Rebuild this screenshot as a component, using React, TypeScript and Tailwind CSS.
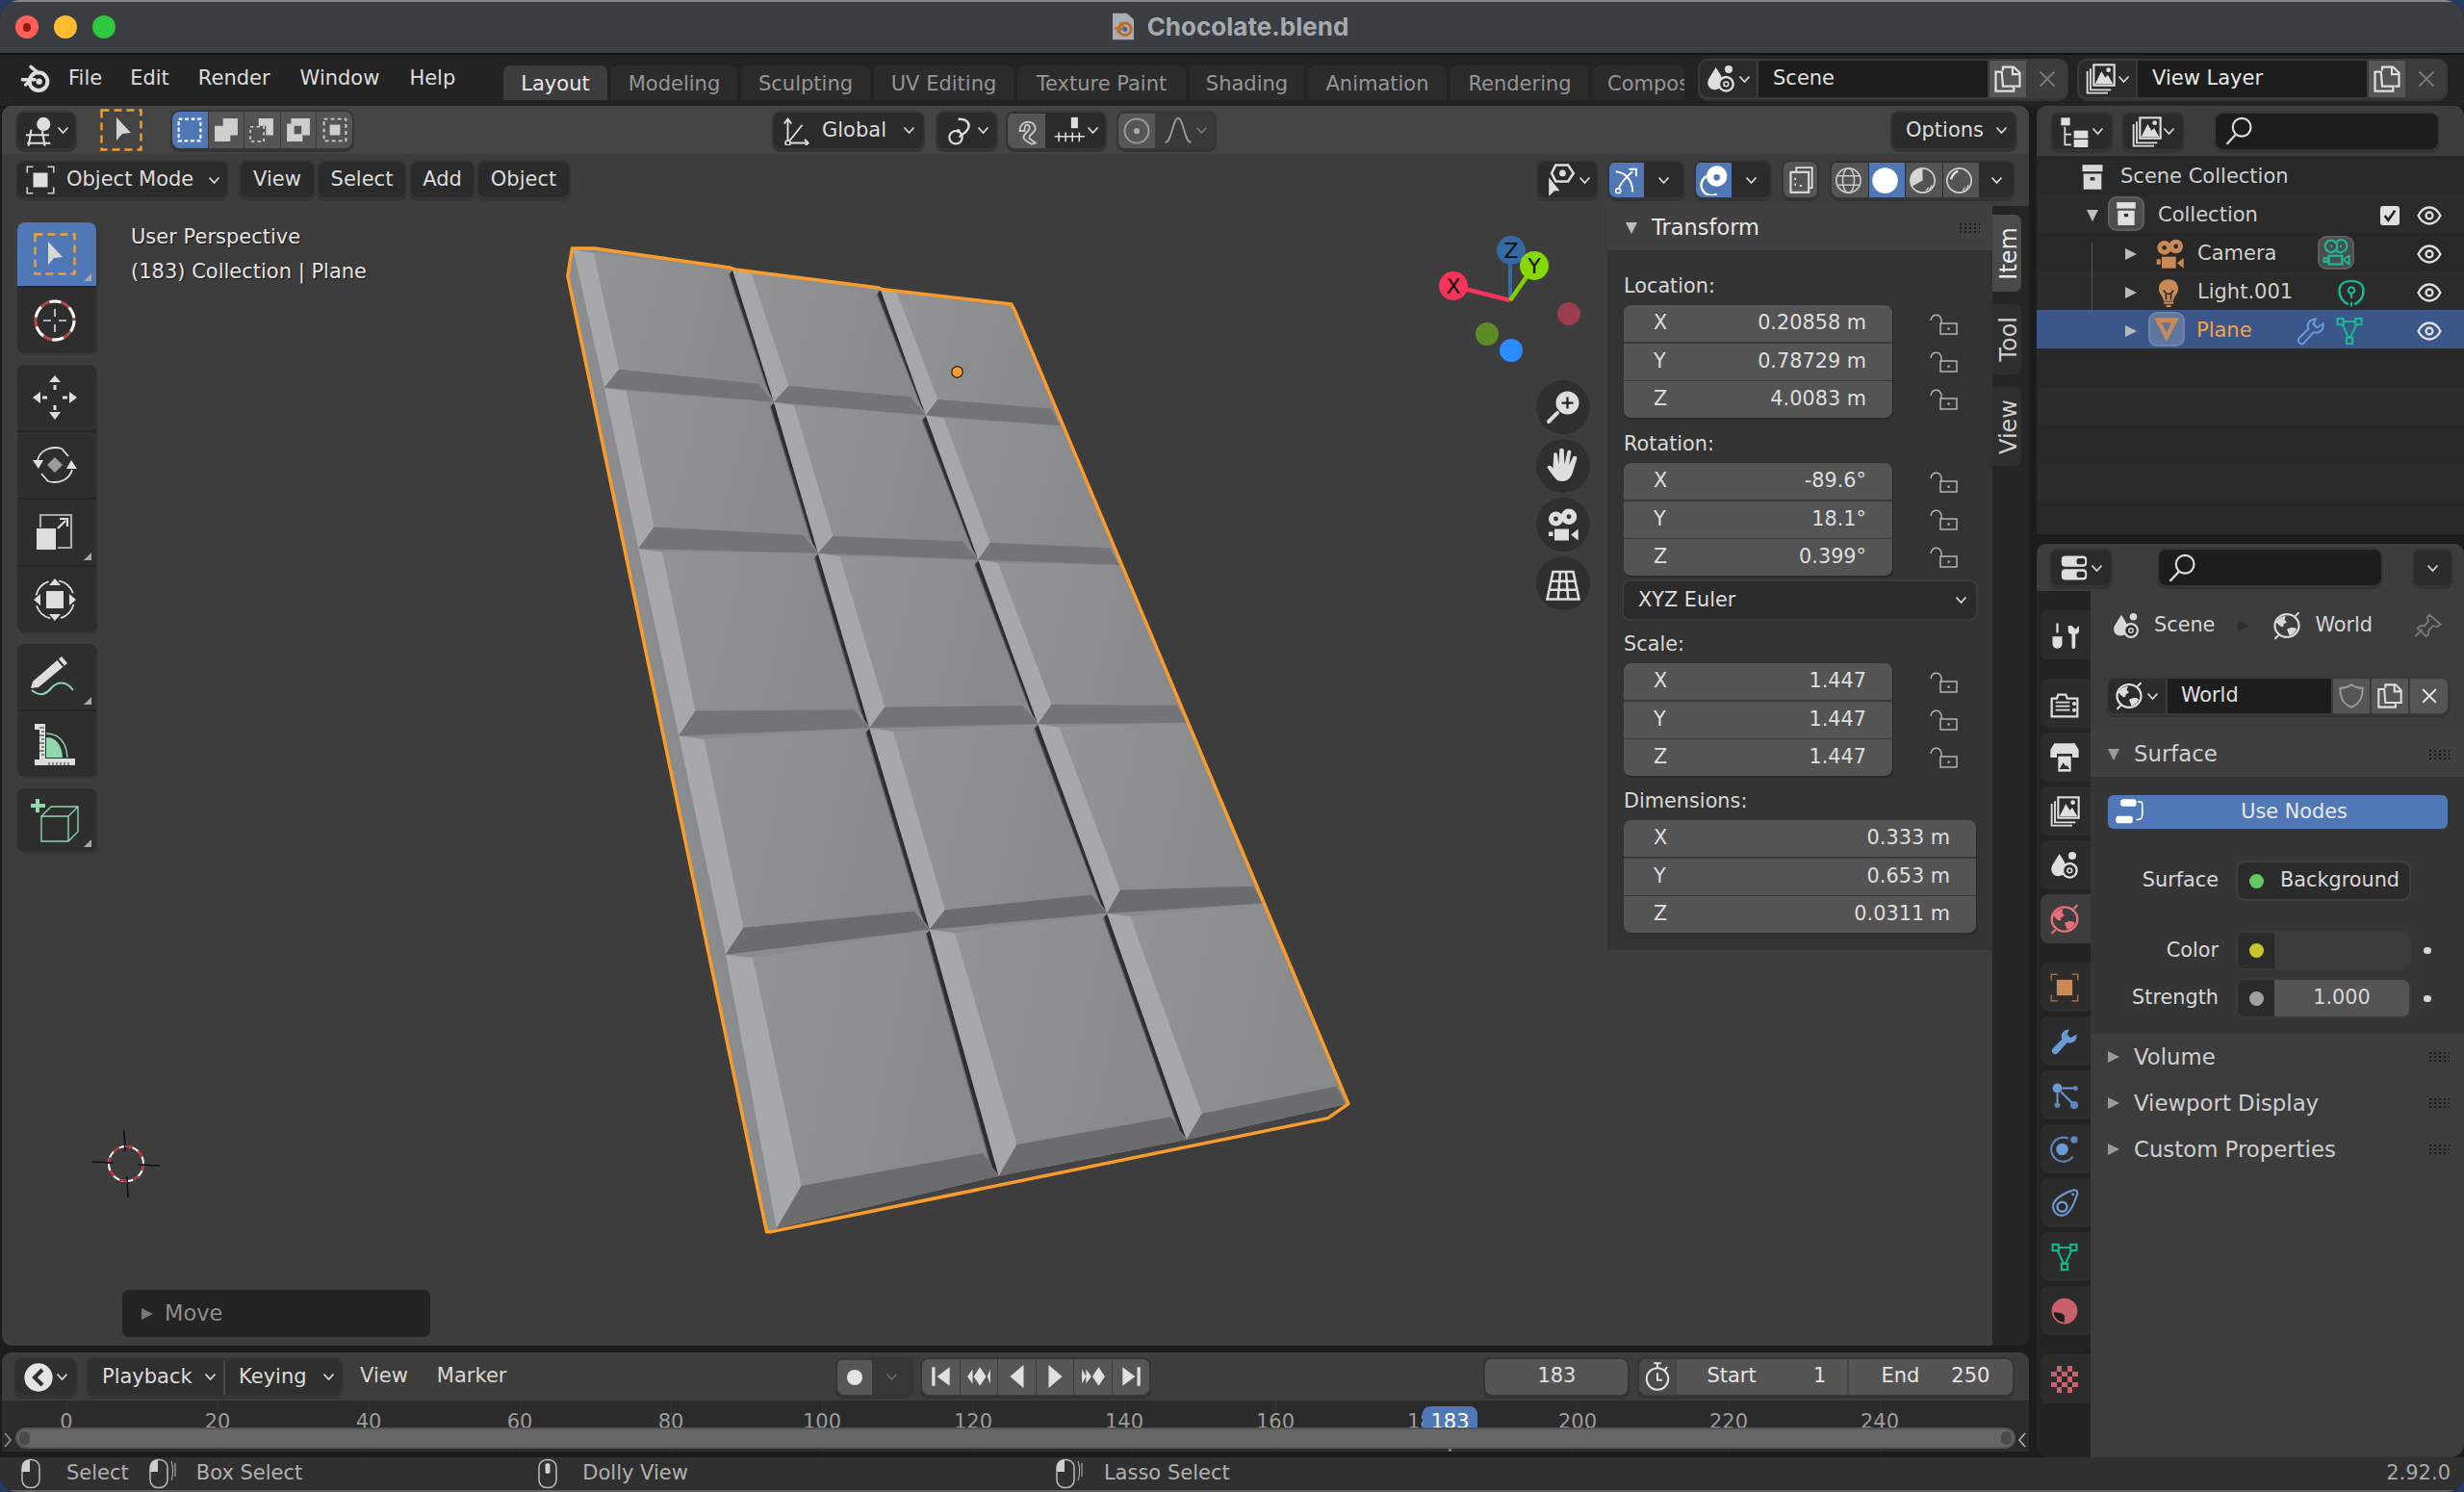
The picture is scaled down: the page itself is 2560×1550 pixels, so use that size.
import React from "react";

type P = { c?: string; s?: number; className?: string };
const W = "#dedede";

function Ic({ s = 28, h, vb = "0 0 24 24", children, className }: { s?: number; h?: number; vb?: string; children: React.ReactNode; className?: string }) {
  return (
    <svg width={s} height={h ?? s} viewBox={vb} fill="none" className={"shrink-0 " + (className ?? "")}>
      {children}
    </svg>
  );
}
const Chev = ({ c = "#d8d8d8" }: P) => (
  <svg width="13" height="9" viewBox="0 0 13 9" fill="none" className="shrink-0">
    <path d="M1.5 1.5 6.5 7l5-5.500" stroke={c} strokeWidth="1.8" />
  </svg>
);
const Blender = () => (
  <Ic s={32} h={32}>
    <path d="M9 2.500 15 7.500" stroke={W} strokeWidth="2.600" strokeLinecap="round" />
    <path d="M2.500 12.500 H12 M5 16.500 9.500 12.500" stroke={W} strokeWidth="2.600" strokeLinecap="round" />
    <circle cx="15" cy="14" r="7" stroke={W} strokeWidth="3" />
    <circle cx="15.500" cy="14" r="2.400" fill={W} />
  </Ic>
);
const Scenes = ({ s = 30, c = W }: P) => (
  <Ic s={s}>
    <path d="M8 3 C11 8 14 11 13 16 C12 20 8 21 5 20 C1 18 1 14 3 11Z" fill={c} />
    <circle cx="18" cy="4.500" r="3" fill={c} />
    <circle cx="16" cy="16" r="5.500" stroke={c} strokeWidth="1.800" fill="#2b2b2b" />
    <circle cx="16" cy="16" r="1.800" stroke={c} strokeWidth="1.200" />
  </Ic>
);
const Copy = ({ s = 30 }: P) => (
  <Ic s={s}>
    <path d="M8 5V2h9l5 5v11h-4" stroke={W} strokeWidth="1.800" />
    <path d="M7 6H2v16h15v-4H8Z" stroke={W} strokeWidth="1.800" />
    <path d="M16 2v6h6" stroke={W} strokeWidth="1.800" />
  </Ic>
);
const X = ({ c = "#777", s = 20 }: P) => (
  <Ic s={s}>
    <path d="M3 3 21 21M21 3 3 21" stroke={c} strokeWidth="2.400" />
  </Ic>
);
const VLayer = ({ s = 30, c = W }: P) => (
  <Ic s={s}>
    <path d="M2 6v17h16M4.500 4v16.500h16" stroke={c} strokeWidth="1.400" />
    <rect x="7" y="1" width="16" height="16" fill="#2b2b2b" stroke={c} strokeWidth="1.600" />
    <path d="M8 16 13 6l3 5 2-2 4 7Z" fill={c} />
    <circle cx="18.500" cy="5" r="1.800" fill={c} />
  </Ic>
);
const Search = ({ s = 30 }: P) => (
  <Ic s={s}>
    <circle cx="14.500" cy="9" r="7.500" stroke={W} strokeWidth="1.700" />
    <path d="M9.500 15 2 23" stroke={W} strokeWidth="1.800" />
  </Ic>
);
const Grip = () => (
  <svg width="21" height="10" viewBox="0 0 21 10" className="shrink-0">
    {[0, 5, 10, 15, 20].map((x) => [0, 4, 8].map((y) => <rect key={x + "-" + y} x={x} y={y} width="2" height="2" fill="#141414" opacity="0.85" />))}
  </svg>
);
const Eye = () => (
  <Ic s={26} h={20} vb="0 0 26 20">
    <path d="M1.500 10C5 3 9 1.500 13 1.500S21 3 24.500 10C21 17 17 18.500 13 18.500S5 17 1.500 10Z" stroke={W} strokeWidth="2.300" />
    <circle cx="13" cy="10" r="3.500" stroke={W} strokeWidth="2.300" />
  </Ic>
);
const Lock = () => (
  <Ic s={29} h={23} vb="0 0 29 23">
    <path d="M1 8C2 1 10 0 12 7v4" stroke="#b4b4b4" strokeWidth="1.400" />
    <rect x="11" y="11" width="17" height="11" stroke="#b4b4b4" strokeWidth="1.500" />
    <rect x="18.500" y="15.500" width="2.200" height="2.200" fill="#b4b4b4" />
  </Ic>
);
const Box3 = ({ s = 28, c = W }: P) => (
  <Ic s={s}>
    <rect x="3" y="1" width="18" height="6" fill={c} />
    <path d="M4 9h16v14H4Z" fill={c} />
    <rect x="10" y="12" width="4" height="3" fill="#333" />
  </Ic>
);
const Cam = ({ s = 32, c = "#c98a55", stroke = false }: P & { stroke?: boolean }) =>
  stroke ? (
    <Ic s={s}>
      <circle cx="8" cy="7" r="5" stroke={c} strokeWidth="1.800" />
      <path d="M12 5c2-5 9-4 9 2 0 5-6 6-9 4" stroke={c} strokeWidth="1.800" />
      <circle cx="8" cy="7" r="1" fill={c} />
      <circle cx="16" cy="7" r="1" fill={c} />
      <rect x="6" y="15" width="11" height="7" stroke={c} strokeWidth="1.800" />
      <path d="M18 18l5-3v7Z M2 17h3v3H2Z" stroke={c} strokeWidth="1.500" />
    </Ic>
  ) : (
    <Ic s={s}>
      <circle cx="8" cy="7" r="5.500" fill={c} />
      <circle cx="17" cy="6" r="5.500" fill={c} />
      <circle cx="8" cy="7" r="1.800" fill="#2b2b2b" />
      <circle cx="17" cy="6" r="1.800" fill="#2b2b2b" />
      <rect x="6" y="14" width="11" height="9" fill={c} />
      <path d="M18 19l5-4v8ZM2 16h3v4H2Z" fill={c} />
    </Ic>
  );
const Bulb = ({ s = 30, c = "#c98a55" }: P) => (
  <Ic s={s}>
    <path d="M12 1c5 0 8 3 8 8 0 4-3 5-4 10H8C7 14 4 13 4 9c0-5 3-8 8-8Z" fill={c} />
    <path d="M8 10l2 3v5M16 10l-2 3v5M10 13h4" stroke="#2b2b2b" strokeWidth="1.300" />
    <path d="M8 20.500h8M10 23h4" stroke={c} strokeWidth="1.800" />
  </Ic>
);
const LightData = () => (
  <Ic s={30} h={34} vb="0 0 24 28">
    <path d="M9.500 24C3 21 1 16 2 10 4 2 20 2 22 10c1 6-1 11-7.500 14" stroke="#1fb594" strokeWidth="2" />
    <circle cx="12" cy="12" r="2.600" stroke="#1fb594" strokeWidth="1.800" />
    <path d="M12 15v4M12 22v4" stroke="#1fb594" strokeWidth="1.800" />
  </Ic>
);
const PlaneI = ({ s = 28 }: P) => (
  <Ic s={s}>
    <path d="M1 2h22L12 23Z" fill="#c98a55" />
    <path d="M7.500 6h9L12 15Z" fill="#5f769f" />
  </Ic>
);
const WR = "M22 8c0 4-4 6-8 5l-8 9c-2 2-6-1-4-4l8-8C8 6 11 2 16 2l-2 4 3 3 5-3Z";
const Wrench = ({ s = 30, c = "#6c9ad6" }: P) => (
  <Ic s={s}>
    <path d={WR} fill={c} />
  </Ic>
);
const WrenchO = ({ s = 30, c = "#6c9ad6" }: P) => (
  <Ic s={s}>
    <path d={WR} stroke={c} strokeWidth="1.600" />
  </Ic>
);
const MeshData = ({ s = 30, c = "#1fb594", bg = "#3b5689" }: P & { bg?: string }) => (
  <Ic s={s}>
    <path d="M5 4h14L12 19Z" stroke={c} strokeWidth="1.700" />
    <rect x="2" y="1.500" width="5" height="5" fill={bg} stroke={c} strokeWidth="1.700" />
    <rect x="17" y="1.500" width="5" height="5" fill={bg} stroke={c} strokeWidth="1.700" />
    <rect x="9.500" y="17.500" width="5" height="5" fill={bg} stroke={c} strokeWidth="1.700" />
  </Ic>
);
const World = ({ s = 30, c = W }: P) => (
  <Ic s={s}>
    <ellipse cx="12" cy="12" rx="10" ry="9.500" stroke={c} strokeWidth="1.800" />
    <path d="M3 9c3-4 6-5 8-5l-1 3 2 2-3 2c1 3-2 2-3 1Z M12 15c3-2 7-2 8 0-1 3-4 5-6 5Z" fill={c} />
    <path d="M19 4l3-3M5 20l-3 3" stroke={c} strokeWidth="1.600" />
  </Ic>
);

/* toolbar icons */
const ActiveTool = ({ s = 44 }: P) => (
  <Ic s={s} vb="0 0 44 44" h={44}>
    <rect x="1.500" y="1.500" width="41" height="41" stroke="#f0a030" strokeWidth="2.400" strokeDasharray="8 5" />
    <path d="M17 9v24l6-7 9-1Z" fill="#d4d4d4" />
  </Ic>
);
const ToolCursor = () => (
  <Ic s={48}>
    <circle cx="12" cy="12" r="10" stroke="#b34a4a" strokeWidth="1.500" />
    <circle cx="12" cy="12" r="10" stroke="#fff" strokeWidth="1.500" strokeDasharray="6 5" />
    <path d="M12 6v4M12 14v4M6 12h4M14 12h4" stroke="#ddd" strokeWidth=".8" />
  </Ic>
);
const ToolMove = () => (
  <Ic s={50} vb="0 0 50 50">
    <path d="M25 2l6 7H19ZM25 48l6-8H19ZM2 25l8-6v12ZM48 25l-8-6v12Z" fill={W} />
    <path d="M25 12v5M25 33v5M12 25h5M33 25h5" stroke={W} strokeWidth="3" />
  </Ic>
);
const ToolRotate = () => (
  <Ic s={50} vb="0 0 50 50">
    <path d="M7 20C10 9 22 5 32 8l7 8M43 30c-3 11-15 15-25 12l-7-8" stroke={W} strokeWidth="1.800" />
    <path d="M2 20h11l-5 9ZM48 29H37l5-9Z" fill={W} />
    <path d="M25 17l8 8-8 8-8-8Z" fill="#9c9c9c" />
  </Ic>
);
const ToolScale = () => (
  <Ic s={40} vb="0 0 40 40">
    <path d="M5 15V2h32v34H23" stroke="#a8a8a8" strokeWidth="2.200" />
    <rect x="1" y="16" width="20" height="22" fill={W} />
    <path d="M23 16l8-8M25 6h8v8" stroke={W} strokeWidth="2.200" />
  </Ic>
);
const ToolTransform = () => (
  <Ic s={50} vb="0 0 50 50">
    <circle cx="25" cy="25" r="20" stroke={W} strokeWidth="1.800" strokeDasharray="20 11" strokeDashoffset="-5" />
    <rect x="16" y="16" width="18" height="18" fill={W} />
    <path d="M25 3l6 7H19ZM25 47l6-7H19ZM3 25l7-6v12ZM47 25l-7-6v12Z" fill={W} />
  </Ic>
);
const ToolAnnotate = () => (
  <Ic s={54} vb="0 0 54 54">
    <path d="M4 32 34 6l6 7-30 25-8 1Z" fill={W} />
    <path d="M30 9l6 7" stroke="#2e2e2e" strokeWidth="2" />
    <path d="M3 41c10 8 16 3 21-3 5-5 14-8 22 3" stroke="#8fd8ae" strokeWidth="2" />
  </Ic>
);
const ToolMeasure = () => (
  <Ic s={46} vb="0 0 46 46">
    <path d="M2 2h11v36h31v7H2V39h5V8H2Z" fill={W} />
    <path d="M12 6h-5M12 10h-3M12 14h-5M12 18h-3M12 22h-5M12 26h-3M12 30h-5M12 34h-3M17 45v-3M21 45v-3M25 45v-3M29 45v-3M33 45v-3M37 45v-3" stroke="#2e2e2e" strokeWidth="1" />
    <path d="M14 16c10 0 16 7 17 21H14Z" fill="#8fd8ae" />
    <path d="M14 12c13 0 21 9 22 25" stroke="#8fd8ae" strokeWidth="1.400" />
  </Ic>
);
const ToolAdd = () => (
  <Ic s={52} vb="0 0 52 52">
    <path d="M8 4v14M1 11h15" stroke="#8fd8ae" strokeWidth="4" />
    <path d="M12 22h28v26H12ZM12 22l10-10h28v26L40 48M40 22l10-10" stroke="#8fd8ae" strokeWidth="1.400" />
  </Ic>
);
const Corner = () => <div className="absolute right-[5px] bottom-[5px] w-0 h-0 border-l-[8px] border-l-transparent border-b-[8px] border-b-[#a8a8a8]" />;

/* small button shell */
const rim = "shadow-[0_0_0_2px_#363636,0_2px_0_2px_#333]";
const rimB = "shadow-[0_0_0_2px_#3a3a3a,0_2px_0_2px_#333]";
const Btn = ({ className = "", children }: { className?: string; children?: React.ReactNode }) => (
  <div className={"flex items-center h-[37px] pt-[1px] rounded-[7px] bg-[#2b2b2b] text-[#dcdcdc] text-[21px] shrink-0 " + rim + " " + className}>{children}</div>
);
const TabBtn = ({ name, w, active }: { name: string; w: number; active?: boolean }) => (
  <div style={{ width: w }} className={"h-[36px] pt-[3px] mr-[4px] rounded-t-[7px] overflow-hidden shrink-0 flex items-center justify-center text-[21px] whitespace-nowrap " + (active ? "bg-[#3d3d3d] text-[#e8e8e8]" : "bg-[#2b2b2b] text-[#959595]")}>
    {name}
  </div>
);

const SelMode = ({ kind }: { kind: number }) => {
  const d = "#cfcfcf";
  return (
    <Ic s={26}>
      {kind === 0 && <rect x="1.500" y="1.500" width="21" height="21" stroke="#fff" strokeWidth="2" strokeDasharray="3.500 2.500" />}
      {kind === 1 && <path d="M9 1h14v16h-7v6H1V8h8Z" fill={d} />}
      {kind === 2 && (
        <>
          <path d="M9 1h14v16H16V8H9Z" fill={d} />
          <path d="M1 9h13v14H1Z" stroke={d} strokeWidth="1.600" strokeDasharray="3 3" />
        </>
      )}
      {kind === 3 && <path fillRule="evenodd" d="M5 1h18v16h-7v6H1V6h4ZM8 8v8h7V8Z" fill={d} />}
      {kind === 4 && (
        <>
          <rect x="1.500" y="1.500" width="21" height="21" stroke={d} strokeWidth="1.800" strokeDasharray="3.500 3" />
          <rect x="7" y="7" width="10" height="10" fill={d} />
        </>
      )}
    </Ic>
  );
};

const Shading = ({ k }: { k: number }) => (
  <Ic s={29}>
    {k === 0 && (
      <>
        <circle cx="12" cy="12" r="10.500" stroke="#c8c8c8" strokeWidth="1.400" />
        <ellipse cx="12" cy="12" rx="5" ry="10.500" stroke="#c8c8c8" strokeWidth="1.300" />
        <path d="M2 8h20M2 16h20" stroke="#c8c8c8" strokeWidth="1.300" />
      </>
    )}
    {k === 1 && <circle cx="12" cy="12" r="11" fill="#fff" />}
    {k === 2 && (
      <>
        <circle cx="12" cy="12" r="10.500" stroke="#cfcfcf" strokeWidth="1.400" />
        <path d="M12 1.500A10.500 10.500 0 0 0 3 17l9-5Z" fill="#d6d6d6" />
        <path d="M15 21l2-3M18 20l2-4" stroke="#cfcfcf" />
      </>
    )}
    {k === 3 && (
      <>
        <circle cx="12" cy="12" r="10.500" stroke="#cfcfcf" strokeWidth="1.400" />
        <path d="M5 11c1-4 3-6 6-7" stroke="#e0e0e0" strokeWidth="2" />
        <path d="M15 21l2-3M18 20l2-4" stroke="#cfcfcf" />
      </>
    )}
  </Ic>
);

/* Chocolate bar */
const G = [
  [[62, 30], [350, 60], [618, 90], [858, 118]],
  [[118, 240], [425, 262], [700, 282], [943, 298]],
  [[180, 485], [505, 492], [795, 502], [1050, 510]],
  [[253, 770], [598, 758], [903, 752], [1172, 750]],
  [[338, 1103], [707, 1065], [1028, 1040], [1310, 1025]],
  [[430, 1520], [832, 1440], [1172, 1385], [1460, 1330]],
];
const D = [
  [[27, 28], [27, 25], [22, 24]],
  [[28, 33], [27, 26], [22, 26]],
  [[30, 38], [28, 32], [25, 30]],
  [[32, 41], [28, 30], [24, 35]],
  [[45, 65], [33, 48], [28, 40]],
];
const pts = (a: number[][]) => a.map((p) => p.join(",")).join(" ");
function Chocolate() {
  const cells: React.ReactNode[] = [];
  for (let r = 0; r < 5; r++)
    for (let c = 0; c < 3; c++) {
      const TL = G[r][c], TR = G[r][c + 1], BR = G[r + 1][c + 1], BL = G[r + 1][c];
      const top = [37, 34, 30][c] + r * 3;
      const iTL = [TL[0] + top, TL[1] + 5];
      const iBL = [BL[0] + D[r][c][0], BL[1] - D[r][c][1]];
      const iBR = c < 2 ? [BR[0] - 28, BR[1] - (r === 4 ? 35 : 28)] : [BR[0] - 17, BR[1] - 26];
      cells.push(
        <g key={r + "-" + c}>
          <polygon points={pts([iTL, TR, BR, iBR, iBL])} fill="url(#face)" />
          <polygon points={pts([TL, iTL, iBL, BL])} fill="#a6a8ab" />
          <polygon points={pts([BL, iBL, iBR, BR])} fill={r < 3 ? "#737476" : "#6b6c6e"} />
          {c < 2 && <polygon points={pts([TR, BR, [BR[0] - 14 - r, BR[1] - 24], [TR[0] - 7, TR[1] + 8]])} fill="#5e5f61" />}
          {c < 2 && <polygon points={pts([[TR[0] + 1, TR[1] + 2], [BR[0] + 2, BR[1]], [BR[0] - 8 - r, BR[1] - 14], [TR[0] - 5, TR[1] + 6]])} fill="#2e2e31" />}
        </g>
      );
    }
  const outline = "60,28 100,28 345,57 355,60 615,88 620,90 855,113 860,120 1465,1330 1428,1352 420,1525 412,1525 52,70";
  return (
    <svg width="900" height="1070" viewBox="0 0 1568 1568" preserveAspectRatio="none" className="absolute left-[558px] top-[129px]">
      <defs>
        <linearGradient id="face" x1="0" y1="0" x2="1" y2="0.200">
          <stop offset="0" stopColor="#939496" />
          <stop offset="1" stopColor="#88898b" />
        </linearGradient>
      </defs>
      <polygon points={outline} fill="#8a8b8d" />
      <polygon points="52,70 62,30 430,1520 412,1525" fill="#8b8c8e" />
      <polygon points="1428,1352 1465,1330 1172,1385 832,1440 430,1520 420,1525" fill="#434345" />
      {cells}
      <polygon points={outline} fill="none" stroke="#fa9c2b" strokeWidth="3.500" strokeLinejoin="round" vectorEffect="non-scaling-stroke" />
      <ellipse cx="757" cy="216" rx="10" ry="8.500" fill="#fa9c2b" stroke="#222" strokeWidth="1.200" vectorEffect="non-scaling-stroke" />
    </svg>
  );
}

const Gizmo = () => (
  <svg width="160" height="160" viewBox="1490 240 160 160" className="absolute left-[1488px] top-[129px]">
    <path d="M1569 313V270" stroke="#346aa3" strokeWidth="4" />
    <path d="M1569 313 1510 298" stroke="#f5345c" strokeWidth="4.500" />
    <path d="M1569 313 1592 280" stroke="#7fd000" strokeWidth="4.500" />
    <circle cx="1570" cy="261" r="15" fill="#346aa3" />
    <circle cx="1594" cy="277" r="15" fill="#85d900" />
    <circle cx="1510" cy="298" r="15" fill="#f5345c" />
    <circle cx="1630" cy="327" r="12" fill="#9a3d4e" />
    <circle cx="1545" cy="348" r="12" fill="#5f8a28" />
    <circle cx="1570" cy="365" r="12" fill="#2a8cff" />
    <text x="1570" y="269" textAnchor="middle" fontSize="22" fill="#0c0c0c">Z</text>
    <text x="1594" y="285" textAnchor="middle" fontSize="22" fill="#0c0c0c">Y</text>
    <text x="1510" y="306" textAnchor="middle" fontSize="22" fill="#0c0c0c">X</text>
  </svg>
);
const NavCircle = ({ children }: { children: React.ReactNode }) => (
  <div className="w-[56px] h-[56px] rounded-full bg-[#2f2f2f] flex items-center justify-center">{children}</div>
);
const ToolGroup = ({ children }: { children: React.ReactNode }) => (
  <div className="flex flex-col w-[82px] rounded-[8px] overflow-hidden gap-[2px] bg-[#262626] shadow-[2px_2px_0_#363636]">{children}</div>
);
const ToolItem = ({ children, corner, active, h = 68 }: { children: React.ReactNode; corner?: boolean; active?: boolean; h?: number }) => (
  <div style={{ height: h }} className={"relative flex items-center justify-center pr-[5px] " + (active ? "bg-[#5178b6]" : "bg-[#2e2e2e]")}>
    {children}
    {corner && <Corner />}
  </div>
);

const NumGroup = ({ rows }: { rows: [string, string][] }) => (
  <div className="flex flex-col gap-[1.500px] rounded-[8px] overflow-hidden bg-[#3a3a3a] shadow-[1px_2px_0_#2a2a2a]">
    {rows.map(([a, b]) => (
      <div key={a} className="h-[38px] bg-[#545454] flex items-center justify-between pl-[31px] pr-[27px] text-[#dedede] text-[20.800px]">
        <span>{a}</span>
        <span>{b}</span>
      </div>
    ))}
  </div>
);
const Locked = ({ rows }: { rows: [string, string][] }) => (
  <div className="flex items-start">
    <div className="w-[279px]">
      <NumGroup rows={rows} />
    </div>
    <div className="ml-[39px] flex flex-col">
      {rows.map(([a]) => (
        <div key={a} className="h-[39.500px] flex items-center -mt-[0.500px]">
          <Lock />
        </div>
      ))}
    </div>
  </div>
);
const Lbl = ({ t, h = 47 }: { t: string; h?: number }) => (
  <div style={{ height: h }} className="flex items-center pt-[8px] text-[20.800px] text-[#d8d8d8]">
    {t}
  </div>
);

const PTab = ({ children, active }: { children: React.ReactNode; active?: boolean }) => (
  <div className={"h-[51px] w-[52px] ml-[4px] rounded-l-[8px] flex items-center justify-center pr-[2px] " + (active ? "bg-[#3d3d3d]" : "bg-[#2c2c2c]")}>{children}</div>
);

const OutRow = ({ bg, children }: { bg: string; children?: React.ReactNode }) => (
  <div className={"h-[40px] pt-[3px] flex items-center relative text-[21px] text-[#cfcfcf] shrink-0 " + bg}>{children}</div>
);
const Tri = ({ c = "#bbb" }: P) => <div className="w-0 h-0 border-y-[6px] border-y-transparent border-l-[12px]" style={{ borderLeftColor: c }} />;
const TriD = ({ c = "#bbb" }: P) => <div className="w-0 h-0 border-x-[6px] border-x-transparent border-t-[12px]" style={{ borderTopColor: c }} />;

const Mouse = ({ fill = "left" }: { fill?: string }) => (
  <Ic s={24} h={32} vb="0 0 24 32">
    <rect x="3" y="1.500" width="18" height="29" rx="8" stroke="#bdbdbd" strokeWidth="1.500" />
    {fill === "left" && <path d="M3 14V9a8 8 0 0 1 8-7.500V14Z" fill="#cfcfcf" />}
    {fill === "mid" && <rect x="9.500" y="5" width="5" height="11" rx="2.500" fill="#cfcfcf" />}
  </Ic>
);
const Drag = () => <Ic s={7} h={28} vb="0 0 7 28"><path d="M1 1c2 6 2 14 0 20M5 3v14" stroke="#bdbdbd" strokeWidth="1" /></Ic>;

const Transport = ({ k }: { k: number }) => {
  const c = "#e0e0e0";
  return (
    <Ic s={26}>
      {k === 0 && <path d="M3 3h3v18H3ZM20 3v18L8 12Z" fill={c} />}
      {k === 1 && <path d="M7 12l6-9 6 9-6 9ZM1 12l5-7v14ZM23 5v14l-3-7Z" fill={c} />}
      {k === 2 && <path d="M18 1v22L5 12Z" fill={c} />}
      {k === 3 && <path d="M6 1v22l13-11Z" fill={c} />}
      {k === 4 && <path d="M11 12l6-9 6 9-6 9ZM1 5v14l4-7ZM5 5l5 7-5 7Z" fill={c} />}
      {k === 5 && <path d="M21 3h-3v18h3ZM4 3v18l12-9Z" fill={c} />}
    </Ic>
  );
};

export default function App() {
  const ticks = Array.from({ length: 14 }, (_, i) => i * 20);
  return (
    <div className="w-[2560px] h-[1550px] bg-[#243a63] overflow-hidden font-['DejaVu_Sans',sans-serif]">
      <div className="h-full flex flex-col rounded-t-[20px] rounded-b-[18px] overflow-hidden bg-[#1c1c1c]">
        {/* Title bar */}
        <div className="h-[57px] shrink-0 relative flex items-center justify-center bg-[#3a3d42] border-t-2 border-t-[#868686] border-b-2 border-b-[#111]">
          <div className="absolute left-[16px] top-[14px] flex gap-[16px]">
            <div className="w-[24px] h-[24px] rounded-full bg-[#ff5f57] flex items-center justify-center">
              <div className="w-[8px] h-[9px] rounded-full bg-[#8e1a12]" />
            </div>
            <div className="w-[24px] h-[24px] rounded-full bg-[#febc2e]" />
            <div className="w-[24px] h-[24px] rounded-full bg-[#2fc840]" />
          </div>
          <div className="flex items-center gap-[14px] -mt-[2px] -ml-[3px]">
            <svg width="22" height="29" viewBox="0 0 24 30" className="shrink-0">
              <path d="M0 0h16l8 7v23H0Z" fill="#a9adb3" />
              <circle cx="14" cy="18" r="7" fill="none" stroke="#c06a22" strokeWidth="3" />
              <path d="M2 17h10M5 22l6-5M8 11l5 4" stroke="#c06a22" strokeWidth="2.500" />
              <circle cx="14" cy="18" r="2.800" fill="#3d6d9e" />
            </svg>
            <span className="font-['Inter',sans-serif] font-bold text-[26px] text-[#a6a9ae]">Chocolate.blend</span>
          </div>
        </div>
        {/* Top bar */}
        <div className="h-[53px] shrink-0 bg-[#232323] flex items-start">
          <div className="ml-[20px] mt-[9px] w-[32px]"><Blender /></div>
          <div className="flex text-[21px] text-[#dcdcdc] h-[50px] items-center w-[451px]">
            <span className="ml-[19px]">File</span>
            <span className="ml-[29px]">Edit</span>
            <span className="ml-[30px]">Render</span>
            <span className="ml-[31px]">Window</span>
            <span className="ml-[31px]">Help</span>
          </div>
          <div className="flex ml-[20px] mt-[11px] w-[1227px] overflow-hidden shrink-0">
            <TabBtn name="Layout" w={108} active />
            <TabBtn name="Modeling" w={131} />
            <TabBtn name="Sculpting" w={134} />
            <TabBtn name="UV Editing" w={145} />
            <TabBtn name="Texture Paint" w={175} />
            <TabBtn name="Shading" w={119} />
            <TabBtn name="Animation" w={144} />
            <TabBtn name="Rendering" w={144} />
            <div className="w-[95px] shrink-0 h-[36px] pt-[3px] rounded-t-[7px] bg-[#2b2b2b] text-[#959595] text-[21px] overflow-hidden whitespace-nowrap pl-[15px] flex items-center">Compositing</div>
          </div>
          {/* Scene */}
          <div className={"mt-[6px] ml-[16px] flex items-stretch h-[38px] w-[381px] shrink-0 rounded-[8px] overflow-hidden bg-[#3a3a3a] gap-[2px] " + rimB}>
            <div className="w-[59px] bg-[#2b2b2b] flex items-center justify-center gap-[2px]"><Scenes s={32} /><Chev /></div>
            <div className="w-[238px] bg-[#1d1d1d] flex items-center pl-[15px] text-[21px] text-[#e0e0e0]">Scene</div>
            <div className="w-[38px] bg-[#555] flex items-center justify-center"><Copy s={30} /></div>
            <div className="flex-1 bg-[#3c3c3c] flex items-center justify-center"><X /></div>
          </div>
          <div className={"mt-[6px] ml-[13px] flex items-stretch h-[38px] w-[381px] shrink-0 rounded-[8px] overflow-hidden bg-[#3a3a3a] gap-[2px] " + rimB}>
            <div className="w-[59px] bg-[#2b2b2b] flex items-center justify-center gap-[2px]"><VLayer s={32} /><Chev /></div>
            <div className="w-[238px] bg-[#1d1d1d] flex items-center pl-[15px] text-[21px] text-[#e8e8e8]">View Layer</div>
            <div className="w-[38px] bg-[#555] flex items-center justify-center"><Copy s={30} /></div>
            <div className="flex-1 bg-[#3c3c3c] flex items-center justify-center"><X /></div>
          </div>
        </div>

        {/* Main */}
        <div className="h-[1404px] shrink-0 flex">
          {/* Left */}
          <div className="w-[2106px] ml-[2px] shrink-0 flex flex-col gap-[7px]">
            {/* Viewport */}
            <div className="relative h-[1288px] bg-[#3d3d3d] rounded-[10px] overflow-hidden">
              <Chocolate />
              <Gizmo />
              {/* Tool header */}
              <div className="relative h-[50px] bg-[#444444] flex items-center">
                <Btn className="ml-[16px] w-[60px] justify-center gap-[1px]">
                  <Ic s={34}>
                    <circle cx="15" cy="7" r="5" fill={W} />
                    <path d="M2 15h17M3 21h17M6 11 4 23M14 12l2 11" stroke={W} strokeWidth="1.500" />
                  </Ic>
                  <Chev />
                </Btn>
                <div className="ml-[26px]"><ActiveTool /></div>
                <div className={"ml-[31px] w-[187px] h-[38px] rounded-[8px] overflow-hidden flex gap-[1px] bg-[#3a3a3a] shrink-0 " + rim}>
                  {[0, 1, 2, 3, 4].map((k) => (
                    <div key={k} className={"flex-1 flex items-center justify-center " + (k === 0 ? "bg-[#5178b6]" : "bg-[#545454]")}>
                      <SelMode kind={k} />
                    </div>
                  ))}
                </div>
                <Btn className="ml-[438px] w-[155px] pl-[7px] pr-[8px]">
                  <Ic s={30}>
                    <path d="M6 22V3M3 6l3-4 3 4M6 22l12-15M6 22h17M20 19l3 3-3 3" stroke={W} strokeWidth="1.500" />
                    <circle cx="6" cy="22" r="2" stroke={W} strokeWidth="1.300" fill="#2b2b2b" />
                  </Ic>
                  <span className="ml-[13px] flex-1">Global</span>
                  <Chev />
                </Btn>
                <Btn className="ml-[15px] w-[61px] justify-center gap-[2px]">
                  <Ic s={32}>
                    <circle cx="9" cy="17" r="5" stroke={W} strokeWidth="1.600" />
                    <path d="M11 3c6-1 9 3 8 6-1 5-6 5-7 8" stroke={W} strokeWidth="1.800" />
                    <circle cx="11" cy="12" r="1.500" fill={W} />
                  </Ic>
                  <Chev />
                </Btn>
                <Btn className="ml-[12px] w-[101px] overflow-hidden">
                  <div className="w-[39px] h-full bg-[#555] flex items-center justify-center">
                    <Ic s={30}><path d="M6 12C6 3 18 2 19 10c0 4-8 6-4 9l4 3-3 1C8 19 8 17 11 14c4-3 4-7 1-7-2 0-2 3-2 5Z" stroke="#c8c8c8" strokeWidth="1.500" /></Ic>
                  </div>
                  <div className="flex-1 flex items-center justify-center gap-[2px]">
                    <Ic s={34}><rect x="14" y="2" width="5" height="8" fill={W} /><path d="M2 16h22M5 13v7M10 13v7M15 13v7M20 13v7" stroke={W} strokeWidth="1.100" /></Ic>
                    <Chev />
                  </div>
                </Btn>
                <Btn className="ml-[14px] w-[100px] overflow-hidden bg-[#393939]">
                  <div className="w-[38px] h-full bg-[#555] flex items-center justify-center">
                    <Ic s={30}><circle cx="12" cy="12" r="10" stroke="#999" strokeWidth="1.600" /><circle cx="12" cy="12" r="2.500" fill="#aaa" /></Ic>
                  </div>
                  <div className="flex-1 flex items-center justify-center gap-[2px]">
                    <Ic s={32}><path d="M2 21c5 0 6-19 10-19s5 19 10 19" stroke="#999" strokeWidth="1.400" /></Ic>
                    <Chev c="#777" />
                  </div>
                </Btn>
                <Btn className="ml-auto mr-[14px] w-[128px] justify-between pl-[14px] pr-[8px]">
                  <span>Options</span>
                  <Chev />
                </Btn>
              </div>
              {/* View header */}
              <div className="relative h-[50px] flex items-start pt-[8px]">
                <Btn className="ml-[16px] w-[218px] pl-[9px] pr-[7px]">
                  <Ic s={30}>
                    <path d="M1 6V1h5M18 1h5v5M23 18v5h-5M6 23H1v-5" stroke="#cfcfcf" strokeWidth="1.300" />
                    <rect x="6" y="6" width="12" height="12" fill="#dedede" />
                  </Ic>
                  <span className="ml-[12px] flex-1">Object Mode</span>
                  <Chev />
                </Btn>
                <Btn className="ml-[14px] w-[76px] justify-center">View</Btn>
                <Btn className="ml-[5px] w-[90px] justify-center">Select</Btn>
                <Btn className="ml-[6px] w-[65px] justify-center">Add</Btn>
                <Btn className="ml-[5px] w-[94px] justify-center">Object</Btn>
                <Btn className="ml-auto w-[61px] justify-center gap-[1px]">
                  <Ic s={34}>
                    <path d="M8 1l9 0 4 6-4 6H8L5 7Z" stroke={W} strokeWidth="1.800" />
                    <circle cx="13" cy="7" r="2.400" fill={W} />
                    <path d="M3 10v14l4-4 4 0Z" fill={W} />
                  </Ic>
                  <Chev />
                </Btn>
                <Btn className="ml-[13px] w-[77px] overflow-hidden">
                  <div className="w-[36px] h-full bg-[#5178b6] flex items-center justify-center">
                    <Ic s={30}>
                      <path d="M3 5c9 1 14 8 14 17M17 5c-6 5-10 9-12 15" stroke="#fff" strokeWidth="1.500" />
                      <path d="M14 3h6v6" stroke="#fff" strokeWidth="1.500" />
                      <circle cx="5" cy="21" r="2" stroke="#fff" strokeWidth="1.300" />
                    </Ic>
                  </div>
                  <div className="flex-1 flex justify-center"><Chev /></div>
                </Btn>
                <Btn className="ml-[13px] w-[77px] overflow-hidden">
                  <div className="w-[37px] h-full bg-[#5178b6] flex items-center justify-center">
                    <Ic s={32}>
                      <circle cx="14" cy="9" r="8" fill="#fff" />
                      <circle cx="14" cy="10" r="2.500" fill="#5178b6" />
                      <path d="M6 9a8 8 0 1 0 8 14" stroke="#fff" strokeWidth="1.800" />
                    </Ic>
                  </div>
                  <div className="flex-1 flex justify-center"><Chev /></div>
                </Btn>
                <Btn className="ml-[14px] w-[35px] bg-[#555] justify-center">
                  <Ic s={28}>
                    <path d="M8 5V1h14v18h-3" stroke={W} strokeWidth="1.600" />
                    <rect x="3" y="5" width="16" height="18" stroke={W} strokeWidth="1.800" />
                    <path d="M7 10v2M7 15v2M11 17h2" stroke={W} strokeWidth="1.500" />
                  </Ic>
                </Btn>
                <Btn className="ml-[15px] mr-[16px] w-[189px] overflow-hidden">
                  {[0, 1, 2, 3].map((k) => (
                    <div key={k} className={"w-[37.500px] h-full mr-[1px] pr-[3px] flex items-center justify-center " + (k === 1 ? "bg-[#5178b6]" : "bg-[#545454]")}>
                      <Shading k={k} />
                    </div>
                  ))}
                  <div className="flex-1 flex justify-center"><Chev /></div>
                </Btn>
              </div>

              {/* Overlay text */}
              <div className="absolute left-[134px] top-[118px] text-[21px] text-[#e4e4e4] leading-[36px] [text-shadow:1px_1px_1px_#111]">
                <div>User Perspective</div>
                <div>(183) Collection | Plane</div>
              </div>
              {/* Toolbar */}
              <div className="absolute left-[16px] top-[121px] flex flex-col gap-[12px]">
                <ToolGroup>
                  <ToolItem active corner h={66}>
                    <Ic s={44} vb="0 0 44 44">
                      <rect x="1.500" y="1.500" width="41" height="41" stroke="#f0a030" strokeWidth="2.400" strokeDasharray="8 5" />
                      <path d="M15 9v24l6-7 9-1Z" fill="#d8d8d8" />
                    </Ic>
                  </ToolItem>
                  <ToolItem>
                    <ToolCursor />
                  </ToolItem>
                </ToolGroup>
                <ToolGroup>
                  <ToolItem><ToolMove /></ToolItem>
                  <ToolItem><ToolRotate /></ToolItem>
                  <ToolItem corner><ToolScale /></ToolItem>
                  <ToolItem><ToolTransform /></ToolItem>
                </ToolGroup>
                <ToolGroup>
                  <ToolItem corner><ToolAnnotate /></ToolItem>
                  <ToolItem><ToolMeasure /></ToolItem>
                </ToolGroup>
                <ToolGroup>
                  <ToolItem corner h={66}><ToolAdd /></ToolItem>
                </ToolGroup>
              </div>
              {/* 3D cursor */}
              <svg width="74" height="74" viewBox="0 0 74 74" className="absolute left-[92px] top-[1062px]">
                <circle cx="37" cy="37" r="18" fill="none" stroke="#fff" strokeWidth="2" />
                <circle cx="37" cy="37" r="18" fill="none" stroke="#c0202a" strokeWidth="2" strokeDasharray="7 7" />
                <path d="M35 2l1 22M38 50l1 22M2 35l22 1M50 38l22 1" stroke="#111" strokeWidth="1.600" />
              </svg>
              {/* Nav gizmos */}
              <div className="absolute left-[1594px] top-[285px] flex flex-col gap-[5px]">
                <NavCircle>
                  <Ic s={36}>
                    <circle cx="15" cy="9" r="8" fill="#dedede" />
                    <path d="M15 5v8M11 9h8" stroke="#222" strokeWidth="1.500" />
                    <path d="M8 16 2 22" stroke="#dedede" strokeWidth="2.600" strokeLinecap="round" />
                  </Ic>
                </NavCircle>
                <NavCircle>
                  <Ic s={36}>
                    <path d="M8 22C5 19 3 16 1 13c1-2 3-1 4 1L5.500 4c0-1.500 2-1.500 2.500 0l1 7 .500-10c0-1.500 3-1.500 3 0l.500 10 2-9c.500-1.500 3-1 2.500.500l-1.500 9 3-6c1-1 3 0 2.500 1.500l-3 10C17 21 14 24 8 22Z" fill="#dedede" />
                  </Ic>
                </NavCircle>
                <NavCircle>
                  <Ic s={36}>
                    <circle cx="7" cy="8" r="5" fill="#dedede" />
                    <circle cx="16" cy="6.500" r="5.500" fill="#dedede" />
                    <circle cx="7" cy="8" r="1.600" fill="#333" />
                    <circle cx="16" cy="6.500" r="1.600" fill="#333" />
                    <rect x="6" y="15" width="10" height="8" fill="#dedede" />
                    <path d="M17.500 19l5-4v8ZM2 17h3v3H2Z" fill="#dedede" />
                  </Ic>
                </NavCircle>
                <NavCircle>
                  <Ic s={36}>
                    <path d="M5 4h14l4 19H1ZM3 10.500h18M2 16.500h20M10 4 8.500 23M14 4l1.500 19" stroke="#dedede" strokeWidth="1.700" />
                  </Ic>
                </NavCircle>
              </div>
              {/* Move panel */}
              <div className="absolute left-[125px] top-[1230px] w-[320px] h-[49px] rounded-[7px] bg-[#232323] flex items-center pl-[20px] text-[22.500px] text-[#8d8d8d]">
                <Tri c="#777" />
                <span className="ml-[12px]">Move</span>
              </div>

              {/* N panel */}
              <div className="absolute left-[1668px] top-[102px] w-[400px] h-[775px] flex flex-col">
                <div className="h-[48px] pt-[1px] bg-[#404040] flex items-center pl-[19px] pr-[13px] text-[#e6e6e6] text-[22.500px]">
                  <TriD c="#bbb" />
                  <span className="ml-[15px] flex-1">Transform</span>
                  <Grip />
                </div>
                <div className="flex-1 bg-[#333333] pl-[17px] pr-[17px] pt-[10px]">
                  <Lbl t="Location:" />
                  <Locked rows={[["X", "0.20858 m"], ["Y", "0.78729 m"], ["Z", "4.0083 m"]]} />
                  <Lbl t="Rotation:" />
                  <Locked rows={[["X", "-89.6°"], ["Y", "18.1°"], ["Z", "0.399°"]]} />
                  <div className="mt-[6px] h-[39px] rounded-[7px] bg-[#2b2b2b] flex items-center justify-between pl-[15px] pr-[9px] text-[20.800px] text-[#dedede] shadow-[0_0_0_2px_#3c3c3c]">
                    <span>XYZ Euler</span>
                    <Chev />
                  </div>
                  <Lbl t="Scale:" h={46} />
                  <Locked rows={[["X", "1.447"], ["Y", "1.447"], ["Z", "1.447"]]} />
                  <Lbl t="Dimensions:" h={46} />
                  <NumGroup rows={[["X", "0.333 m"], ["Y", "0.653 m"], ["Z", "0.0311 m"]]} />
                </div>
              </div>
              {/* N tabs */}
              <div className="absolute left-[2068px] top-[104px] w-[38px] bottom-0 bg-[#252525] flex flex-col gap-[13px] pt-[9px]">
                {[["Item", 80, true], ["Tool", 73, false], ["View", 82, false]].map(([t, h, a]) => (
                  <div key={t as string} style={{ height: h as number }} className={"w-[30px] pl-[3px] flex items-center justify-center rounded-r-[7px] text-[24px] " + (a ? "bg-[#4a4a4a] text-[#e8e8e8]" : "bg-[#2f2f2f] text-[#cfcfcf]")}>
                    <span className="[writing-mode:vertical-rl] rotate-180">{t as string}</span>
                  </div>
                ))}
              </div>
            </div>

            {/* Timeline */}
            <div className="h-[103px] rounded-t-[10px] overflow-hidden flex flex-col bg-[#2b2b2b]">
              <div className="h-[50px] shrink-0 bg-[#3d3d3d] flex items-center text-[#d8d8d8] text-[21px]">
                <Btn className="ml-[14px] w-[63px] justify-center gap-[2px] bg-[#2f2f2f]">
                  <Ic s={32}>
                    <circle cx="12" cy="12" r="11" fill="#e4e4e4" />
                    <path d="M15 6l-6 6 6 6" stroke="#2f2f2f" strokeWidth="3" />
                  </Ic>
                  <Chev />
                </Btn>
                <Btn className="ml-[12px] w-[264px] overflow-hidden bg-[#2f2f2f] gap-0">
                  <div className="w-[143px] h-full flex items-center justify-between pl-[15px] pr-[7px] border-r-2 border-r-[#484848]"><span>Playback</span><Chev /></div>
                  <div className="flex-1 h-full flex items-center justify-between pl-[14px] pr-[7px]"><span>Keying</span><Chev /></div>
                </Btn>
                <span className="ml-[19px]">View</span>
                <span className="ml-[30px]">Marker</span>
                <Btn className="ml-[344px] w-[77px] overflow-hidden bg-[#373737]">
                  <div className="w-[36px] h-full bg-[#565656] flex items-center justify-center"><div className="w-[16px] h-[16px] rounded-full bg-[#e4e4e4]" /></div>
                  <div className="flex-1 flex justify-center"><Chev c="#666" /></div>
                </Btn>
                <div className={"ml-[11px] w-[236px] h-[37px] rounded-[7px] overflow-hidden flex gap-[1px] bg-[#3a3a3a] shrink-0 " + rim}>
                  {[0, 1, 2, 3, 4, 5].map((k) => (
                    <div key={k} className="flex-1 bg-[#565656] flex items-center justify-center"><Transport k={k} /></div>
                  ))}
                </div>
                <div className={"ml-[349px] w-[148px] h-[37px] rounded-[7px] bg-[#545454] flex items-center justify-center text-[#e0e0e0] shrink-0 " + rim}>183</div>
                <div className={"ml-[12px] w-[388px] h-[37px] rounded-[7px] bg-[#545454] overflow-hidden flex items-center text-[#e4e4e4] shrink-0 " + rim}>
                  <div className="w-[37px] h-full flex items-center justify-center bg-[#4a4a4a]">
                    <Ic s={30}>
                      <circle cx="12" cy="14" r="9" stroke="#e0e0e0" strokeWidth="1.600" />
                      <path d="M9 1h6M12 1v4M12 9v6h4M20 4l-2 3" stroke="#e0e0e0" strokeWidth="1.600" />
                    </Ic>
                  </div>
                  <div className="w-[181px] h-full flex items-center justify-between pl-[31px] pr-[22px] border-x-2 border-x-[#464646]"><span>Start</span><span>1</span></div>
                  <div className="flex-1 h-full flex items-center justify-between pl-[33px] pr-[24px]"><span>End</span><span>250</span></div>
                </div>
              </div>
              <div className="relative flex-1 bg-[#2b2b2b] overflow-hidden">
                {ticks.map((t) => (
                  <div key={t} style={{ left: 67 + t * 7.85 }} className="absolute top-0 bottom-0 w-[1px] bg-[#353535]" />
                ))}
                {ticks.slice(0, 13).map((t) => (
                  <div key={"l" + t} style={{ left: 67 + t * 7.85 }} className="absolute top-[9px] -translate-x-1/2 text-[21px] text-[#9c9c9c] leading-[26px]">{t}</div>
                ))}
                <div className="absolute left-[1476px] top-[6px] w-[57px] h-[30px] rounded-t-[8px] bg-[#5178b6] flex justify-center text-[21px] text-white leading-[32px]">183</div>
                <div className="absolute left-[1503px] top-[44px] bottom-0 w-[3px] bg-[#5178b6]" />
                <div className="absolute left-[16px] top-[30px] w-[2074px] h-[18px] rounded-full bg-[#666] shadow-[0_0_0_2px_#555] flex items-center justify-between px-[2px]">
                  <div className="w-[11px] h-[14px] rounded-full bg-[#4a4a4a]" />
                  <div className="w-[11px] h-[14px] rounded-full bg-[#4a4a4a]" />
                </div>
                <svg width="10" height="18" viewBox="0 0 10 18" className="absolute left-[1px] top-[32px]"><path d="M2 2l6 7-6 7" stroke="#888" strokeWidth="1.800" fill="none" /></svg>
                <svg width="10" height="18" viewBox="0 0 10 18" className="absolute left-[2094px] top-[32px]"><path d="M8 2 2 9l6 7" stroke="#aaa" strokeWidth="1.800" fill="none" /></svg>
              </div>
            </div>
          </div>

          {/* Right */}
          <div className="ml-[8px] w-[444px] shrink-0 flex flex-col gap-[10px]">
            {/* Outliner */}
            <div className="relative h-[445px] rounded-t-[10px] overflow-hidden flex flex-col bg-[#2b2b2b]">
              <div className="h-[52px] shrink-0 bg-[#3d3d3d] flex items-center">
                <Btn className="ml-[16px] w-[62px] justify-center gap-[1px]">
                  <Ic s={32}>
                    <rect x="1" y="1" width="7" height="6" fill={W} />
                    <path d="M4 8v14h5M4 14h5" stroke={W} strokeWidth="1.300" />
                    <rect x="11" y="11" width="11" height="6" fill={W} />
                    <rect x="11" y="18" width="11" height="6" fill={W} />
                  </Ic>
                  <Chev />
                </Btn>
                <Btn className="ml-[12px] w-[62px] justify-center gap-[1px]"><VLayer s={32} /><Chev /></Btn>
                <div className={"ml-[34px] w-[231px] h-[37px] rounded-[8px] bg-[#1d1d1d] flex items-center pl-[9px] " + rim}><Search /></div>
              </div>
              <OutRow bg="bg-[#282828]">
                <div className="ml-[44px]"><Box3 s={28} c="#d8d8d8" /></div>
                <span className="ml-[15px]">Scene Collection</span>
              </OutRow>
              <OutRow bg="bg-[#2b2b2b]">
                <div className="ml-[52px]"><TriD c="#bfbfbf" /></div>
                <div className="ml-[10px] w-[38px] h-[36px] -mt-[3px] rounded-[9px] bg-[#4d4d4d] border-2 border-[#5e5e5e] flex items-center justify-center"><Box3 s={26} /></div>
                <span className="ml-[14px]">Collection</span>
                <div className="absolute left-[357px] w-[20px] h-[20px] rounded-[3px] bg-[#e0e0e0] flex items-center justify-center">
                  <Ic s={14}><path d="M3 12l6 8L21 3" stroke="#222" strokeWidth="4.500" /></Ic>
                </div>
                <div className="absolute left-[395px]"><Eye /></div>
              </OutRow>
              <OutRow bg="bg-[#282828]">
                <div className="ml-[92px]"><Tri /></div>
                <div className="ml-[18px]"><Cam /></div>
                <span className="ml-[13px]">Camera</span>
                <div className="absolute left-[292px] w-[38px] h-[35px] -mt-[3px] rounded-[9px] bg-[#4d4d4d] border-2 border-[#5e5e5e] flex items-center justify-center"><Cam s={30} c="#1fb594" stroke /></div>
                <div className="absolute left-[395px]"><Eye /></div>
              </OutRow>
              <OutRow bg="bg-[#2b2b2b]">
                <div className="ml-[92px]"><Tri /></div>
                <div className="ml-[18px]"><Bulb /></div>
                <span className="ml-[15px]">Light.001</span>
                <div className="absolute left-[312px]"><LightData /></div>
                <div className="absolute left-[395px]"><Eye /></div>
              </OutRow>
              <OutRow bg="bg-[#3b5689]">
                <div className="ml-[92px]"><Tri /></div>
                <div className="ml-[12px] w-[38px] h-[36px] -mt-[3px] rounded-[9px] bg-[#5f769f] border-2 border-[#6d83aa] flex items-center justify-center"><PlaneI /></div>
                <span className="ml-[12px] text-[#f4a340]">Plane</span>
                <div className="absolute left-[270px]"><WrenchO s={30} c="#6c9ad6" /></div>
                <div className="absolute left-[310px]"><MeshData /></div>
                <div className="absolute left-[395px]"><Eye /></div>
              </OutRow>
              <OutRow bg="bg-[#282828]" />
              <OutRow bg="bg-[#2b2b2b]" />
              <OutRow bg="bg-[#282828]" />
              <OutRow bg="bg-[#2b2b2b]" />
              <div className="flex-1 bg-[#282828]" />
              <div className="absolute left-[57px] top-[142px] w-[1px] h-[100px] bg-[#555]" />
            </div>

            {/* Properties */}
            <div className="flex-1 rounded-t-[10px] rounded-b-[14px] overflow-hidden flex flex-col bg-[#3d3d3d]">
              <div className="h-[49px] shrink-0 bg-[#3d3d3d] flex items-center">
                <Btn className="ml-[15px] w-[62px] justify-center gap-[2px]">
                  <Ic s={30}>
                    <rect x="1.500" y="2" width="21" height="9" rx="3" fill={W} />
                    <rect x="14" y="4" width="7" height="5" rx="2" fill="#2b2b2b" />
                    <rect x="1.500" y="13" width="21" height="9" rx="3" fill={W} />
                    <rect x="14" y="15" width="7" height="5" rx="2" fill="#2b2b2b" />
                  </Ic>
                  <Chev />
                </Btn>
                <div className={"ml-[50px] w-[231px] h-[37px] rounded-[8px] bg-[#1d1d1d] flex items-center pl-[9px] " + rim}><Search /></div>
                <Btn className="ml-[34px] w-[39px] justify-center"><Chev /></Btn>
              </div>
              <div className="flex flex-1">
                {/* Tabs */}
                <div className="w-[56px] shrink-0 bg-[#232323] pt-[20px] flex flex-col gap-[5px]">
                  <PTab>
                    <Ic s={30}><path d="M6 2v8" stroke={W} strokeWidth="1.800" /><path d="M2 13h8v6a4 4 0 0 1-8 0Z" fill={W} /><path d="M15 4v4c0 2 1 3 3 3v10c0 3 3 3 3 0V11c2 0 3-1 3-3V4l-3 3-3-3" fill={W} /></Ic>
                  </PTab>
                  <div className="h-[10px]" />
                  <PTab>
                    <Ic s={32}><path d="M2 8h4l1-3h6l1 3h8v14H2Z" stroke={W} strokeWidth="1.700" /><path d="M5 11h11M5 14h11M5 17h11" stroke={W} strokeWidth="1.300" /><circle cx="19.500" cy="12" r="1.500" fill={W} /><circle cx="19.500" cy="17" r="1.500" fill={W} /></Ic>
                  </PTab>
                  <PTab>
                    <Ic s={32}><path d="M4 1h16l3 5v6h-5V9H6v3H1V6Z" fill={W} /><rect x="7" y="11" width="10" height="12" fill={W} /><path d="M8 21l3-5 2 3 1-1 2 3Z" fill="#2c2c2c" /></Ic>
                  </PTab>
                  <PTab><VLayer s={32} /></PTab>
                  <PTab><Scenes s={32} c={W} /></PTab>
                  <PTab active><World s={32} c="#e8707a" /></PTab>
                  <div className="h-[10px]" />
                  <PTab>
                    <Ic s={30}>
                      <path d="M1 6V1h5M18 1h5v5M23 18v5h-5M6 23H1v-5" stroke="#a06b44" strokeWidth="1.300" />
                      <rect x="5.500" y="5.500" width="13" height="13" fill="#c98a55" />
                    </Ic>
                  </PTab>
                  <PTab><Wrench s={30} c="#6c9ad6" /></PTab>
                  <PTab>
                    <Ic s={30}>
                      <circle cx="6" cy="6" r="4" fill="#6c9ad6" />
                      <circle cx="21" cy="6" r="2" fill="#5d86be" />
                      <circle cx="6" cy="20" r="2.300" fill="#5d86be" />
                      <circle cx="20" cy="20" r="3.200" fill="#5d86be" />
                      <path d="M10 6h9M6 10v8M9 9l9 9" stroke="#6c9ad6" strokeWidth="1.500" />
                    </Ic>
                  </PTab>
                  <PTab>
                    <Ic s={30}>
                      <path d="M19 18A10 10 0 1 1 15 3" stroke="#5d86be" strokeWidth="1.600" />
                      <circle cx="10" cy="12" r="5" fill="#6c9ad6" />
                      <circle cx="20" cy="4" r="3" fill="#5d86be" />
                    </Ic>
                  </PTab>
                  <PTab>
                    <Ic s={30}>
                      <path d="M3 12c2-5 12-10 17-11 3 0 3 3 2 5-2 6-6 15-11 16-6 1-10-5-8-10Z" stroke="#6c9ad6" strokeWidth="1.700" />
                      <circle cx="10" cy="15" r="4" stroke="#6c9ad6" strokeWidth="2" />
                      <circle cx="19" cy="4.500" r="1.200" fill="#6c9ad6" />
                    </Ic>
                  </PTab>
                  <PTab><MeshData s={30} c="#16b48c" bg="#2c2c2c" /></PTab>
                  <PTab>
                    <Ic s={30}>
                      <circle cx="12" cy="12" r="10" fill="#c8616c" />
                      <path d="M2.500 13c4 0 8 .500 9.500 3v6a10 10 0 0 1-9.500-9Z" fill="#1e1e1e" />
                      <circle cx="12" cy="12" r="10" stroke="#c8616c" strokeWidth="1.400" />
                    </Ic>
                  </PTab>
                  <div className="h-[10px]" />
                  <PTab>
                    <svg width="28" height="28" viewBox="0 0 5 5" shapeRendering="crispEdges">
                      <rect width="5" height="5" fill="#c8616c" />
                      {[[0, 0], [2, 0], [4, 0], [1, 1], [3, 1], [0, 2], [2, 2], [4, 2], [1, 3], [3, 3], [0, 4], [2, 4], [4, 4]].map(([x, y]) => (
                        <rect key={x + "," + y} x={x} y={y} width="1" height="1" fill="#2b2b2b" />
                      ))}
                    </svg>
                  </PTab>
                </div>
                {/* Content */}
                <div className="flex-1 flex flex-col text-[20.800px] text-[#d8d8d8]">
                  <div className="h-[70px] pt-[2px] flex items-center relative pl-[22px]">
                    <Scenes s={30} c="#d8d8d8" />
                    <span className="ml-[14px]">Scene</span>
                    <div className="ml-[24px] opacity-30"><Tri c="#111" /></div>
                    <div className="ml-[24px]"><World s={30} c="#d8d8d8" /></div>
                    <span className="ml-[14px]">World</span>
                    <div className="absolute left-[336px]">
                      <Ic s={30}><path d="M13 3l9 8-3 2-3-1-4 4 0 3-2 2-7-7 3-2h3l3-4-1-3ZM7 15l-6 6" stroke="#777" strokeWidth="1.500" /></Ic>
                    </div>
                  </div>
                  <div className="h-[21px] shrink-0" />
                  <div className={"ml-[18px] w-[353px] h-[36px] rounded-[7px] overflow-hidden flex gap-[2px] bg-[#3a3a3a] shrink-0 " + rimB}>
                    <div className="w-[60px] bg-[#2b2b2b] flex items-center justify-center gap-[3px]"><World s={30} /><Chev /></div>
                    <div className="w-[170px] bg-[#1d1d1d] flex items-center pl-[14px] text-[#e0e0e0]">World</div>
                    <div className="w-[38px] bg-[#555] flex items-center justify-center">
                      <Ic s={28}><path d="M12 2c3 2 6 3 10 3 0 8-2 14-10 17C4 19 2 13 2 5c4 0 7-1 10-3Z" stroke="#9a9a9a" strokeWidth="1.700" /></Ic>
                    </div>
                    <div className="w-[38px] bg-[#555] flex items-center justify-center"><Copy s={28} /></div>
                    <div className="flex-1 bg-[#555] flex items-center justify-center"><X c="#e6e6e6" s={18} /></div>
                  </div>
                  <div className="h-[18px] shrink-0" />
                  <div className="h-[48px] pt-[1px] shrink-0 bg-[#404040] flex items-center pl-[18px] pr-[15px] text-[22.800px] text-[#cfcfcf]">
                    <TriD c="#999" />
                    <span className="ml-[15px] flex-1">Surface</span>
                    <Grip />
                  </div>
                  <div className="h-[267px] shrink-0 bg-[#353535] pt-[19px]">
                    <div className="ml-[18px] w-[353px] h-[35px] pl-[34px] rounded-[6px] bg-[#5178b6] relative flex items-center justify-center text-[#e8e8e8]">
                      <div className="absolute left-[7px]">
                        <Ic s={30}>
                          <rect x="5" y="1" width="13" height="6" rx="2" fill="#fff" />
                          <rect x="1" y="15" width="14" height="6" rx="2" fill="#fff" />
                          <path d="M19 3c4 0 4 0 4 4v7c0 3-1 4-5 4" stroke="#fff" strokeWidth="1.300" />
                        </Ic>
                      </div>
                      Use Nodes
                    </div>
                    <div className="h-[35px]" />
                    <div className="flex items-center h-[38px]">
                      <span className="w-[133px] text-right">Surface</span>
                      <div className="ml-[20px] w-[178px] h-[38px] rounded-[7px] bg-[#2b2b2b] flex items-center pl-[12px] shadow-[0_0_0_2px_#3f3f3f]">
                        <div className="w-[15px] h-[15px] rounded-full bg-[#63c763]" />
                        <span className="ml-[17px]">Background</span>
                      </div>
                    </div>
                    <div className="h-[35px]" />
                    <div className="flex items-center h-[37px]">
                      <span className="w-[133px] text-right">Color</span>
                      <div className="ml-[20px] w-[178px] h-[37px] rounded-[7px] overflow-hidden flex shadow-[0_0_0_2px_#3a3a3a]">
                        <div className="w-[38px] bg-[#2b2b2b] flex items-center justify-center"><div className="w-[15px] h-[15px] rounded-full bg-[#c7c729]" /></div>
                        <div className="flex-1 bg-[#3b3b3b]" />
                      </div>
                      <div className="ml-[15px] w-[8px] h-[7px] rounded-full bg-[#d5d5d5]" />
                    </div>
                    <div className="h-[12px]" />
                    <div className="flex items-center h-[38px]">
                      <span className="w-[133px] text-right">Strength</span>
                      <div className="ml-[20px] w-[178px] h-[38px] rounded-[7px] overflow-hidden flex shadow-[0_0_0_2px_#3a3a3a]">
                        <div className="w-[38px] bg-[#2b2b2b] flex items-center justify-center"><div className="w-[15px] h-[15px] rounded-full bg-[#a1a1a1]" /></div>
                        <div className="flex-1 bg-[#545454] flex items-center justify-center">1.000</div>
                      </div>
                      <div className="ml-[15px] w-[8px] h-[7px] rounded-full bg-[#d5d5d5]" />
                    </div>
                  </div>
                  {["Volume", "Viewport Display", "Custom Properties"].map((t) => (
                    <div key={t} className="h-[48px] shrink-0 flex items-center pl-[18px] pr-[15px] text-[22.800px] text-[#cfcfcf]">
                      <Tri c="#999" />
                      <span className="ml-[15px] flex-1">{t}</span>
                      <Grip />
                    </div>
                  ))}
                </div>
              </div>
            </div>
          </div>
        </div>

        {/* Status bar */}
        <div className="flex-1 bg-[#303030] border-b-2 border-b-[#666] flex items-center text-[21px] text-[#b0b0b0]">
          <div className="ml-[20px]"><Mouse /></div>
          <span className="ml-[25px]">Select</span>
          <div className="ml-[19px]"><Mouse /></div>
          <Drag />
          <span className="ml-[20px]">Box Select</span>
          <div className="ml-[243px]"><Mouse fill="mid" /></div>
          <span className="ml-[24px]">Dolly View</span>
          <div className="ml-[380px]"><Mouse /></div>
          <Drag />
          <span className="ml-[21px]">Lasso Select</span>
          <span className="ml-auto mr-[14px] text-[#a8a8a8]">2.92.0</span>
        </div>
      </div>
    </div>
  );
}
